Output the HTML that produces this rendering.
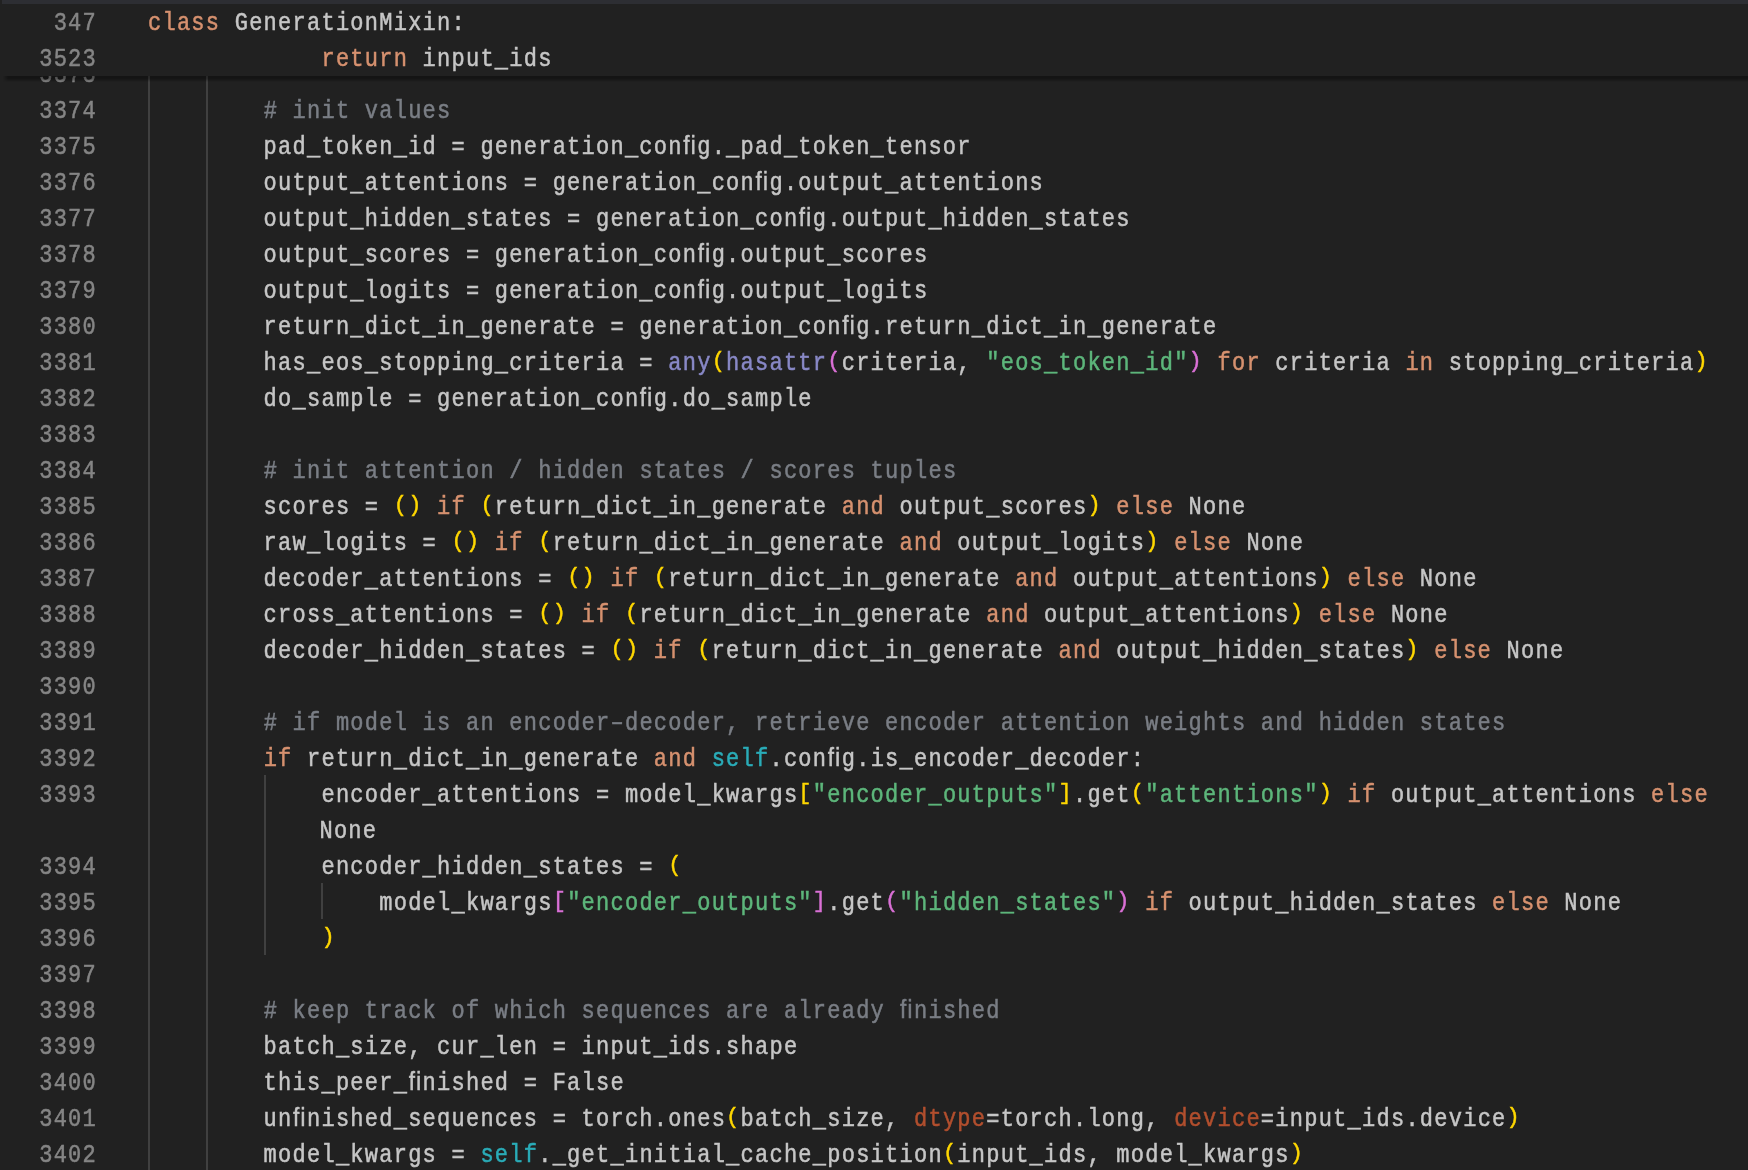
<!DOCTYPE html>
<html><head><meta charset="utf-8"><style>
html,body{margin:0;padding:0;}
:root{--sy:1.17;--dy:4.2px;}
body{width:1748px;height:1170px;overflow:hidden;background:#212121;position:relative;font-family:"Liberation Mono",monospace;}
.ln,.cl{position:absolute;height:36px;line-height:36px;font-size:22px;white-space:pre;transform:translateY(var(--dy)) scaleY(var(--sy));transform-origin:0 23.86px;-webkit-text-stroke:0.45px currentColor;will-change:transform;}
.ln{--sy:1.21;left:0;width:97px;text-align:right;color:#858585;letter-spacing:1.25px;}
.cl{left:147.8px;color:#c6c6c6;letter-spacing:1.25px;}
.kw{color:#D6916F}.com{color:#7A7E85}.str{color:#5DB67B}.bi{color:#8888C6}.self{color:#2AACB8}.kwarg{color:#B24F2E}
.b1{color:#FFD700}.b2{color:#DA70D6}.b3{color:#179FFF}
.b1,.b2,.b3{display:inline-block;transform:translateY(-1.6px) scaleY(0.88);}
.g{position:absolute;width:2px;background:#404040;}
#shadow{position:absolute;left:3px;top:76px;width:1745px;-webkit-mask-image:linear-gradient(90deg,transparent,#000 5px);height:6px;background:linear-gradient(rgba(0,0,0,0.40),rgba(0,0,0,0.34) 45%,rgba(0,0,0,0.12) 80%,rgba(0,0,0,0));}
#strip{position:absolute;left:2px;top:0;width:1746px;height:4px;background:#2d2e33;}
#sticky{position:absolute;left:0;top:0;width:1748px;height:76px;background:#212121;}
</style></head><body>
<div class="g" style="left:148px;top:76px;height:1094px"></div>
<div class="g" style="left:206px;top:76px;height:1094px"></div>
<div class="g" style="left:264px;top:775px;height:180px"></div>
<div class="g" style="left:321px;top:883px;height:36px"></div>
<div class="ln" style="top:55px">3373</div>
<div class="cl" style="top:55px">        <span class="str">&quot;&quot;</span><span class="str">&quot;</span></div>
<div class="ln" style="top:91px">3374</div>
<div class="cl" style="top:91px">        <span class="com"># init values</span></div>
<div class="ln" style="top:127px">3375</div>
<div class="cl" style="top:127px">        pad_token_id = generation_conﬁg._pad_token_tensor</div>
<div class="ln" style="top:163px">3376</div>
<div class="cl" style="top:163px">        output_attentions = generation_conﬁg.output_attentions</div>
<div class="ln" style="top:199px">3377</div>
<div class="cl" style="top:199px">        output_hidden_states = generation_conﬁg.output_hidden_states</div>
<div class="ln" style="top:235px">3378</div>
<div class="cl" style="top:235px">        output_scores = generation_conﬁg.output_scores</div>
<div class="ln" style="top:271px">3379</div>
<div class="cl" style="top:271px">        output_logits = generation_conﬁg.output_logits</div>
<div class="ln" style="top:307px">3380</div>
<div class="cl" style="top:307px">        return_dict_in_generate = generation_conﬁg.return_dict_in_generate</div>
<div class="ln" style="top:343px">3381</div>
<div class="cl" style="top:343px">        has_eos_stopping_criteria = <span class="bi">any</span><span class="b1">(</span><span class="bi">hasattr</span><span class="b2">(</span>criteria, <span class="str">&quot;eos_token_id&quot;</span><span class="b2">)</span> <span class="kw">for</span> criteria <span class="kw">in</span> stopping_criteria<span class="b1">)</span></div>
<div class="ln" style="top:379px">3382</div>
<div class="cl" style="top:379px">        do_sample = generation_conﬁg.do_sample</div>
<div class="ln" style="top:415px">3383</div>
<div class="cl" style="top:415px"></div>
<div class="ln" style="top:451px">3384</div>
<div class="cl" style="top:451px">        <span class="com"># init attention / hidden states / scores tuples</span></div>
<div class="ln" style="top:487px">3385</div>
<div class="cl" style="top:487px">        scores = <span class="b1">(</span><span class="b1">)</span> <span class="kw">if</span> <span class="b1">(</span>return_dict_in_generate <span class="kw">and</span> output_scores<span class="b1">)</span> <span class="kw">else</span> None</div>
<div class="ln" style="top:523px">3386</div>
<div class="cl" style="top:523px">        raw_logits = <span class="b1">(</span><span class="b1">)</span> <span class="kw">if</span> <span class="b1">(</span>return_dict_in_generate <span class="kw">and</span> output_logits<span class="b1">)</span> <span class="kw">else</span> None</div>
<div class="ln" style="top:559px">3387</div>
<div class="cl" style="top:559px">        decoder_attentions = <span class="b1">(</span><span class="b1">)</span> <span class="kw">if</span> <span class="b1">(</span>return_dict_in_generate <span class="kw">and</span> output_attentions<span class="b1">)</span> <span class="kw">else</span> None</div>
<div class="ln" style="top:595px">3388</div>
<div class="cl" style="top:595px">        cross_attentions = <span class="b1">(</span><span class="b1">)</span> <span class="kw">if</span> <span class="b1">(</span>return_dict_in_generate <span class="kw">and</span> output_attentions<span class="b1">)</span> <span class="kw">else</span> None</div>
<div class="ln" style="top:631px">3389</div>
<div class="cl" style="top:631px">        decoder_hidden_states = <span class="b1">(</span><span class="b1">)</span> <span class="kw">if</span> <span class="b1">(</span>return_dict_in_generate <span class="kw">and</span> output_hidden_states<span class="b1">)</span> <span class="kw">else</span> None</div>
<div class="ln" style="top:667px">3390</div>
<div class="cl" style="top:667px"></div>
<div class="ln" style="top:703px">3391</div>
<div class="cl" style="top:703px">        <span class="com"># if model is an encoder–decoder, retrieve encoder attention weights and hidden states</span></div>
<div class="ln" style="top:739px">3392</div>
<div class="cl" style="top:739px">        <span class="kw">if</span> return_dict_in_generate <span class="kw">and</span> <span class="self">self</span>.conﬁg.is_encoder_decoder:</div>
<div class="ln" style="top:775px">3393</div>
<div class="cl" style="top:775px">            encoder_attentions = model_kwargs<span class="b1">[</span><span class="str">&quot;encoder_outputs&quot;</span><span class="b1">]</span>.get<span class="b1">(</span><span class="str">&quot;attentions&quot;</span><span class="b1">)</span> <span class="kw">if</span> output_attentions <span class="kw">else</span></div>
<div class="ln" style="top:811px"></div>
<div class="cl" style="top:811px;margin-left:-2px">            None</div>
<div class="ln" style="top:847px">3394</div>
<div class="cl" style="top:847px">            encoder_hidden_states = <span class="b1">(</span></div>
<div class="ln" style="top:883px">3395</div>
<div class="cl" style="top:883px">                model_kwargs<span class="b2">[</span><span class="str">&quot;encoder_outputs&quot;</span><span class="b2">]</span>.get<span class="b2">(</span><span class="str">&quot;hidden_states&quot;</span><span class="b2">)</span> <span class="kw">if</span> output_hidden_states <span class="kw">else</span> None</div>
<div class="ln" style="top:919px">3396</div>
<div class="cl" style="top:919px">            <span class="b1">)</span></div>
<div class="ln" style="top:955px">3397</div>
<div class="cl" style="top:955px"></div>
<div class="ln" style="top:991px">3398</div>
<div class="cl" style="top:991px">        <span class="com"># keep track of which sequences are already ﬁnished</span></div>
<div class="ln" style="top:1027px">3399</div>
<div class="cl" style="top:1027px">        batch_size, cur_len = input_ids.shape</div>
<div class="ln" style="top:1063px">3400</div>
<div class="cl" style="top:1063px">        this_peer_ﬁnished = False</div>
<div class="ln" style="top:1099px">3401</div>
<div class="cl" style="top:1099px">        unﬁnished_sequences = torch.ones<span class="b1">(</span>batch_size, <span class="kwarg">dtype</span>=torch.long, <span class="kwarg">device</span>=input_ids.device<span class="b1">)</span></div>
<div class="ln" style="top:1135px">3402</div>
<div class="cl" style="top:1135px">        model_kwargs = <span class="self">self</span>._get_initial_cache_position<span class="b1">(</span>input_ids, model_kwargs<span class="b1">)</span></div>
<div id="sticky">
<div class="ln" style="top:2.5px">347</div>
<div class="cl" style="top:2.5px"><span class="kw">class</span> GenerationMixin:</div>
<div class="ln" style="top:38.5px">3523</div>
<div class="cl" style="top:38.5px">            <span class="kw">return</span> input_ids</div>
</div>
<div id="shadow"></div>
<div id="strip"></div>
</body></html>
